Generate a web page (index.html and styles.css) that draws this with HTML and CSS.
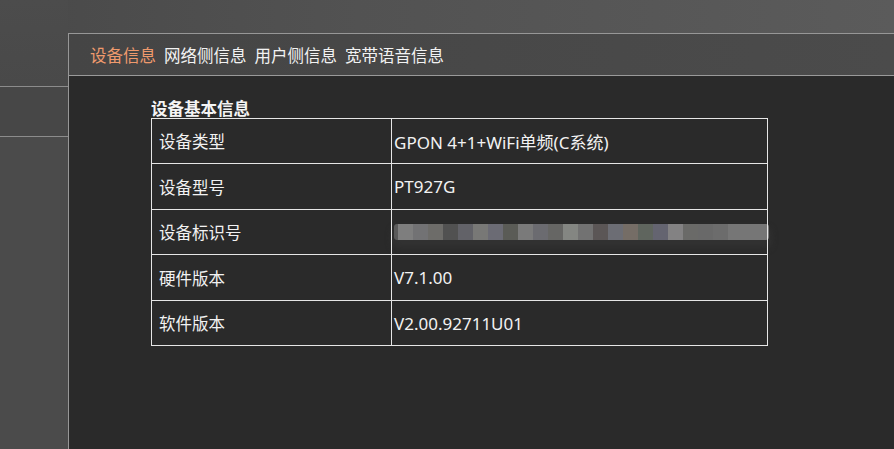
FILE: index.html
```html
<!DOCTYPE html>
<html lang="zh-CN">
<head>
<meta charset="utf-8">
<title>设备信息</title>
<link rel="stylesheet" href="styles.css">
</head>
<body>
<div class="page">
  <aside class="side">
    <div class="side-item side-first"></div>
    <div class="side-item"></div>
    <div class="side-rest"></div>
  </aside>
  <main class="panel">
    <nav class="tabs">
      <span class="tab active">设备信息</span>
      <span class="tab">网络侧信息</span>
      <span class="tab">用户侧信息</span>
      <span class="tab">宽带语音信息</span>
    </nav>
    <section class="content">
      <h2 class="title">设备基本信息</h2>
      <table class="info">
        <tr><td class="label">设备类型</td><td class="value">GPON 4+1+WiFi单频(C系统)</td></tr>
        <tr class="tall"><td class="label">设备型号</td><td class="value">PT927G</td></tr>
        <tr><td class="label">设备标识号</td><td class="value"><div class="mosaic"></div></td></tr>
        <tr class="tall"><td class="label">硬件版本</td><td class="value">V7.1.00</td></tr>
        <tr><td class="label">软件版本</td><td class="value">V2.00.92711U01</td></tr>
      </table>
    </section>
  </main>
</div>
</body>
</html>
```
FILE: styles.css
```css
html, body {
  margin: 0;
  padding: 0;
  height: 100%;
}
body {
  background: linear-gradient(to right, #494949 0%, #525252 40%, #5b5b5b 100%);
  font-family: "Noto Sans", "Noto Sans CJK SC", sans-serif;
  overflow: hidden;
}
.page {
  display: flex;
  height: 449px;
}
.side {
  width: 68px;
  flex: none;
  display: flex;
  flex-direction: column;
}
.side-item {
  height: 49px;
  border-bottom: 1px solid #8c8c8c;
  background: #474747;
}
.side-first {
  height: 86px;
  background: linear-gradient(to bottom, #4c4c4c, #494949);
}
.side-rest {
  flex: 1;
  background: #4b4b4b;
}
.panel {
  flex: 1;
  margin-top: 33px;
  border-top: 1px solid #979797;
  border-left: 1px solid #979797;
  display: flex;
  flex-direction: column;
}
.tabs {
  height: 41px;
  border-bottom: 1px solid #9a9a9a;
  background: linear-gradient(to right, #454545, #4b4b4b);
  display: flex;
  align-items: center;
  gap: 8px;
  padding-left: 21px;
  font-family: "Noto Sans CJK SC", sans-serif;
  font-size: 16.5px;
  color: #f2f2f2;
}
.tab.active {
  color: #ef9a6d;
}
.content {
  flex: 1;
  background: #2a2a2a;
  padding: 22px 0 0 82px;
}
.title {
  margin: 0;
  font-family: "Noto Sans CJK SC", sans-serif;
  font-size: 16.5px;
  font-weight: 700;
  line-height: 20px;
  color: #f4f4f4;
}
.info {
  border-collapse: collapse;
  width: 617px;
  font-size: 17px;
  color: #f2f2f2;
}
.info td {
  border: 1px solid #e6e6e6;
  height: 44px;
  padding: 0;
  vertical-align: middle;
}
.info .tall td {
  height: 45px;
}
.label {
  width: 232px;
  padding-left: 7px !important;
  font-family: "Noto Sans CJK SC", sans-serif;
  font-size: 16.5px;
}
.value {
  padding-left: 2px !important;
}
.mosaic {
  height: 16px;
  margin-left: 0;
  margin-right: -2px;
  border-radius: 3px;
  box-shadow: 0 6px 6px 2px #323232;
  background: linear-gradient(to right,
    #5a5a5a 0 4px, #7e7e7e 4px 19px, #727274 19px 34px, #6d6c69 34px 49px,
    #515151 49px 64px, #626268 64px 79px, #787876 79px 94px, #6b6b74 94px 109px,
    #5a5b56 109px 124px, #7a7a7a 124px 139px, #6b6b70 139px 154px, #666664 154px 169px,
    #848682 169px 184px, #727272 184px 199px, #5b5656 199px 214px, #6c6d74 214px 229px,
    #756d66 229px 244px, #5f655e 244px 259px, #646470 259px 274px, #838283 274px 289px,
    #6a6a68 289px 304px, #696969 304px 319px, #6c6c6c 319px 334px, #767676 334px 374px);
}
```
